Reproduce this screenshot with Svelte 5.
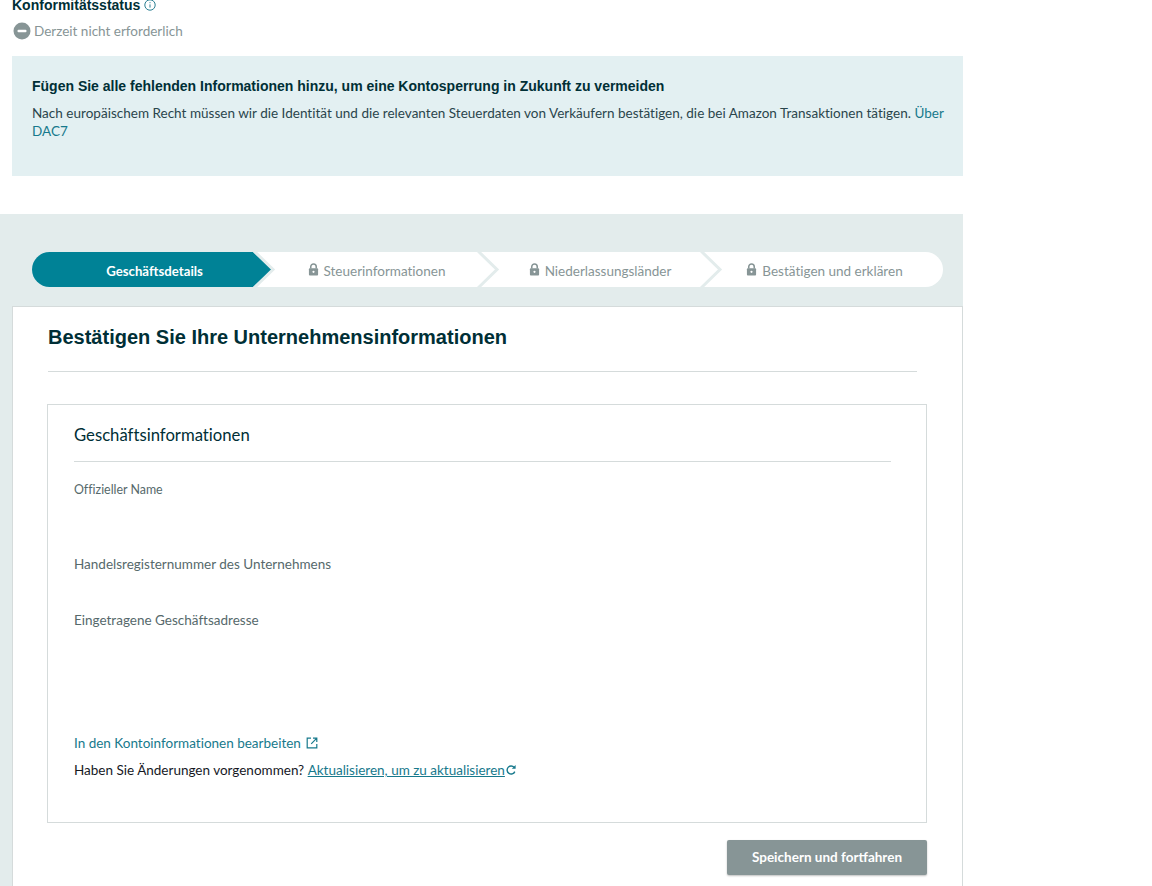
<script>
  const steps = [
    { label: 'Geschäftsdetails', active: true },
    { label: 'Steuerinformationen' },
    { label: 'Niederlassungsländer' },
    { label: 'Bestätigen und erklären' }
  ];
</script>

<div class="page">
  <section class="status">
    <h2>Konformitätsstatus
      <svg class="info" viewBox="0 0 12 12" aria-hidden="true"><circle cx="6" cy="6" r="5.2" /><path d="M6 5.4v3.2M6 3.2v1" /></svg>
    </h2>
    <p class="state">
      <svg viewBox="0 0 18 18" aria-hidden="true"><circle cx="9" cy="9" r="8.5" fill="#879596" /><rect x="4.5" y="7.7" width="9" height="2.6" rx="1" fill="#fff" /></svg>
      Derzeit nicht erforderlich
    </p>
  </section>

  <section class="notice">
    <h3>Fügen Sie alle fehlenden Informationen hinzu, um eine Kontosperrung in Zukunft zu vermeiden</h3>
    <p>Nach europäischem Recht müssen wir die Identität und die relevanten Steuerdaten von Verkäufern bestätigen, die bei Amazon Transaktionen tätigen. <a href="#top">Über DAC7</a></p>
  </section>

  <section class="panel">
    <ol class="stepper">
      {#each steps as step}
        <li class="step" class:active={step.active}>
          {#if step.active}
            <span class="arrow-bg"></span>
          {:else}
            <svg class="lock" viewBox="0 0 12 14" aria-hidden="true"><path d="M3 6V4a3 3 0 0 1 6 0v2" fill="none" stroke="#879596" stroke-width="1.7" /><rect x="1" y="5.6" width="10" height="7.9" rx="1" fill="#879596" /><circle cx="6" cy="9.5" r="1.2" fill="#fff" /></svg>
          {/if}
          <span class="label">{step.label}</span>
          <svg class="chev" viewBox="0 0 24 35" aria-hidden="true"><path d="M1 -1 L20 17.5 L1 36" /></svg>
        </li>
      {/each}
    </ol>

    <div class="card">
      <h1>Bestätigen Sie Ihre Unternehmensinformationen</h1>
      <hr class="rule" />
      <div class="box">
        <h4>Geschäftsinformationen</h4>
        <hr class="rule" />
        <div class="f name">Offizieller Name</div>
        <div class="f reg">Handelsregisternummer des Unternehmens</div>
        <div class="f addr">Eingetragene Geschäftsadresse</div>
        <a class="edit" href="#top">In den Kontoinformationen bearbeiten
          <svg viewBox="0 0 12 12" aria-hidden="true"><path d="M5 1.2H1.2v9.6h9.6V7M7 1.2h3.8V5M10.6 1.4 5.2 6.8" /></svg>
        </a>
        <p class="changes">Haben Sie Änderungen vorgenommen? <a href="#top">Aktualisieren, um zu aktualisieren</a><svg viewBox="0 0 12 12" aria-hidden="true"><path d="M9.8 7.6A4 4 0 1 1 9.2 3.4" /><path class="fill" d="M10.6 1v3.8H6.8z" /></svg></p>
      </div>
      <div class="actions"><button type="button">Speichern und fortfahren</button></div>
    </div>
  </section>
</div>

<style>
  :global(body) { margin: 0; background: #fff; overflow: hidden; }
  .page {
    width: 963px; height: 886px; overflow: hidden;
    font-family: "Lato", "Liberation Sans", sans-serif;
    font-size: 13.5px; color: #16191f;
    font-variant-ligatures: none;
  }
  .status { padding-left: 12px; height: 61px; margin-top: -5px; }
  h2 {
    margin: 0; font: bold 14px/20px "Liberation Sans", sans-serif; color: #002f36;
    display: flex; align-items: center; gap: 4px;
  }
  .info { width: 12px; height: 12px; fill: none; stroke: #2b7f92; stroke-width: 1; }
  .state { margin: 6px 0 0 1px; height: 20px; display: flex; align-items: center; gap: 3px; color: #879596; line-height: 20px; }
  .state svg { width: 18px; height: 18px; }
  .notice { margin-left: 12px; height: 120px; box-sizing: border-box; background: #e3f0f2; padding: 20px 16px 0 20px; }
  .notice h3 { margin: 0; font: bold 14px/20px "Liberation Sans", sans-serif; color: #002f36; }
  .notice p { margin: 8px 0 0; line-height: 18px; color: #2a454c; letter-spacing: .014px; }
  a { color: #17798c; text-decoration: none; }

  .panel { margin-top: 38px; background: #e3ecec; height: 672px; padding-top: 38px; box-sizing: border-box; }
  .stepper {
    list-style: none; margin: 0 20px 0 32px; padding: 0; height: 35px; display: flex;
    background: #fff; border-radius: 18px; overflow: hidden;
  }
  .step { position: relative; flex: 0 0 245px; margin-right: -21px; display: flex; align-items: center; justify-content: center; gap: 5px; color: #879596; padding-top: 3px; box-sizing: border-box; }
  .step:nth-child(2) { flex-basis: 245px; padding-right: 4px; }
  .step:nth-child(3) { flex-basis: 244px; padding-right: 4px; }
  .step:last-child { flex-grow: 1; flex-basis: 243px; margin-right: 0; }
  .step:last-child .chev { display: none; }
  .step.active { color: #fff; font-weight: 700; font-size: 13.2px; }
  .arrow-bg { position: absolute; inset: 0 4px 0 0; background: #008296; clip-path: polygon(0 0, 221px 0, 240px 50%, 221px 100%, 0 100%); }
  .label { position: relative; }
  .lock { width: 11px; height: 13px; margin-top: -4px; }
  .chev { position: absolute; right: 0; top: 0; width: 24px; height: 35px; fill: none; stroke: #e3ecec; stroke-width: 3; }

  .card { margin: 19px 0 0 12px; height: 580px; box-sizing: border-box; background: #fff; border: 1px solid #d5dbdb; border-bottom: 0; padding: 0 35px; }
  h1 { margin: 18px 0 0; font: bold 20px/24px "Liberation Sans", sans-serif; color: #002f36; }
  .rule { border: 0; border-top: 1px solid #d5dbdb; margin: 0; }
  .card > .rule { margin: 22px 10px 0 0; }
  .box { margin: 32px 0 0 -1px; height: 419px; box-sizing: border-box; border: 1px solid #d5dbdb; padding: 0 35px 0 26px; width: 880px; }
  h4 { margin: 19px 0 0; font-size: 16.7px; font-weight: 400; line-height: 22px; color: #002f36; }
  .box > .rule { margin-top: 15px; }
  .f { color: #56696b; line-height: 18px; }
  .name { margin-top: 19px; font-size: 12.4px; }
  .reg { margin-top: 56px; }
  .addr { margin-top: 38px; }
  .edit { display: flex; align-items: center; gap: 5px; margin-top: 105px; line-height: 18px; }
  .edit svg { width: 12px; height: 12px; fill: none; stroke: #17798c; stroke-width: 1.2; }
  .changes { margin: 9px 0 0; line-height: 18px; display: flex; align-items: center; white-space: pre; }
  .changes a { text-decoration: underline; }
  .changes svg { width: 12px; height: 12px; fill: none; stroke: #17798c; stroke-width: 1.4; }
  .changes .fill { fill: #17798c; stroke: none; }
  .actions { display: flex; justify-content: flex-end; margin: 17px 0 0; width: 879px; }
  button {
    width: 200px; height: 35px; border: 0; border-radius: 2px; background: #879596; color: #fff; padding: 0 0 2px;
    font: 700 13.5px "Lato", sans-serif; box-shadow: 0 1px 2px rgba(0,0,0,.25);
  }
</style>
